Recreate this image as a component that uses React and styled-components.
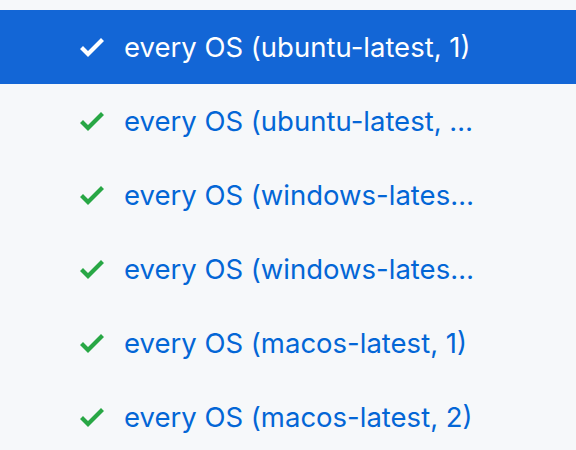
import React from "react";
import styled, { createGlobalStyle } from "styled-components";

const GlobalStyle = createGlobalStyle`
  html, body {
    margin: 0;
    padding: 0;
    background: #f6f8fa;
  }
  body {
    font-family: Inter, "Noto Sans", "Liberation Sans", sans-serif;
  }
`;

const JobList = styled.ul`
  list-style: none;
  margin: 0;
  padding: 10px 0 0 0;
  height: 450px;
  overflow: hidden;
  background: #f6f8fa;
`;

const JobRow = styled.li`
  display: flex;
  align-items: center;
  height: 74px;
  padding-left: 80px;
  background: ${(p) => (p.selected ? "#1366d6" : "transparent")};
`;

const CheckIcon = styled.svg`
  width: 24px;
  height: 32px;
  flex-shrink: 0;
  fill: ${(p) => (p.selected ? "#ffffff" : "#28a745")};
`;

const JobName = styled.span`
  margin-left: 20px;
  font-size: 27.5px;
  color: ${(p) => (p.selected ? "#ffffff" : "#0366d6")};
  white-space: nowrap;
`;

const jobs = [
  "every OS (ubuntu-latest, 1)",
  "every OS (ubuntu-latest, …",
  "every OS (windows-lates…",
  "every OS (windows-lates…",
  "every OS (macos-latest, 1)",
  "every OS (macos-latest, 2)",
];

function Check({ selected }) {
  return (
    <CheckIcon selected={selected} viewBox="0 0 12 16">
      <path d="M12 5l-8 8-4-4 1.5-1.5L4 10l6.5-6.5L12 5z" />
    </CheckIcon>
  );
}

export default function App() {
  return (
    <>
      <GlobalStyle />
      <JobList>
        {jobs.map((name, i) => (
          <JobRow key={i} selected={i === 0}>
            <Check selected={i === 0} />
            <JobName selected={i === 0}>{name}</JobName>
          </JobRow>
        ))}
      </JobList>
    </>
  );
}
